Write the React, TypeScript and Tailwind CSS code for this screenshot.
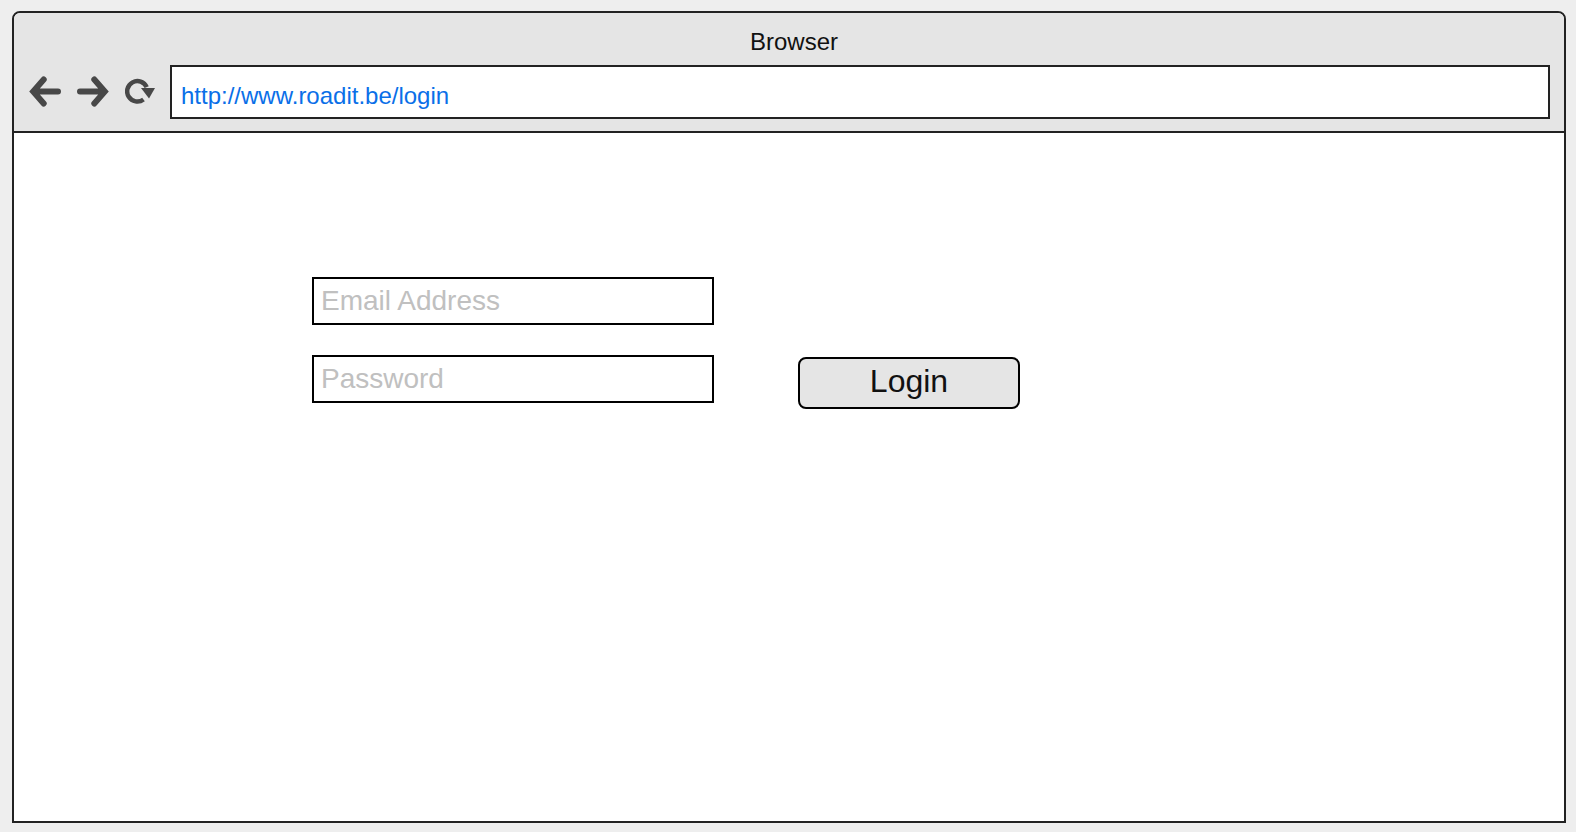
function BackIcon() {
  return (
    <svg width="34" height="32" viewBox="0 0 34 32" fill="none" className="shrink-0">
      <path d="M6 15.5H30M15.7 3.5L5.2 15.5L15.7 27.5" stroke="#484848" strokeWidth="6" strokeLinecap="round" />
    </svg>
  );
}

function ForwardIcon() {
  return (
    <svg width="34" height="32" viewBox="0 0 34 32" fill="none" className="ml-[14px] shrink-0">
      <path d="M28 15.5H4M18.3 3.5L28.8 15.5L18.3 27.5" stroke="#484848" strokeWidth="6" strokeLinecap="round" />
    </svg>
  );
}

function ReloadIcon() {
  return (
    <svg width="32" height="28" viewBox="0 0 32 28" fill="none" className="ml-[15px] shrink-0">
      <path d="M18.5 21.5A10.2 10.2 0 1 1 21.7 9.2" stroke="#484848" strokeWidth="4.5" />
      <path d="M16 10H30L24 20.5Z" fill="#484848" />
    </svg>
  );
}

export default function App() {
  return (
    <div className="h-[832px] w-[1576px] bg-[#eeeeee] pl-[12px] pt-[11px] font-['Liberation_Sans',Arial,sans-serif]">
      <div className="flex h-[812px] w-[1554px] flex-col overflow-hidden rounded-t-[8px] border-2 border-[#222222] bg-white">
        <div className="h-[120px] border-b-2 border-[#222222] bg-[#e5e5e5]">
          <div className="flex h-[52px] items-center justify-center pl-[10px] pt-[5px] text-[24px] leading-none text-[#111111]">
            Browser
          </div>
          <div className="flex items-center pl-[14px] pr-[14px]">
            <BackIcon />
            <ForwardIcon />
            <ReloadIcon />
            <div className="ml-[13px] flex h-[54px] flex-1 items-center border-2 border-[#222222] bg-white pl-[9px] pt-[8px] text-[24px] text-[#0a6fe8]">
              http://www.roadit.be/login
            </div>
          </div>
        </div>
        <div className="flex flex-1 items-start pl-[298px] pt-[144px]">
          <div className="flex w-[402px] flex-col gap-[30px]">
            <input
              placeholder="Email Address"
              className="h-[48px] border-2 border-black bg-white px-[7px] text-[28px] outline-none placeholder:text-[#c0c0c0]"
            />
            <input
              placeholder="Password"
              className="h-[48px] border-2 border-black bg-white px-[7px] text-[28px] outline-none placeholder:text-[#c0c0c0]"
            />
          </div>
          <button className="ml-[84px] mt-[80px] h-[52px] w-[222px] rounded-[8px] border-2 border-black bg-[#e5e5e5] pb-[5px] text-[32px] leading-none text-[#111111]">
            Login
          </button>
        </div>
      </div>
    </div>
  );
}
